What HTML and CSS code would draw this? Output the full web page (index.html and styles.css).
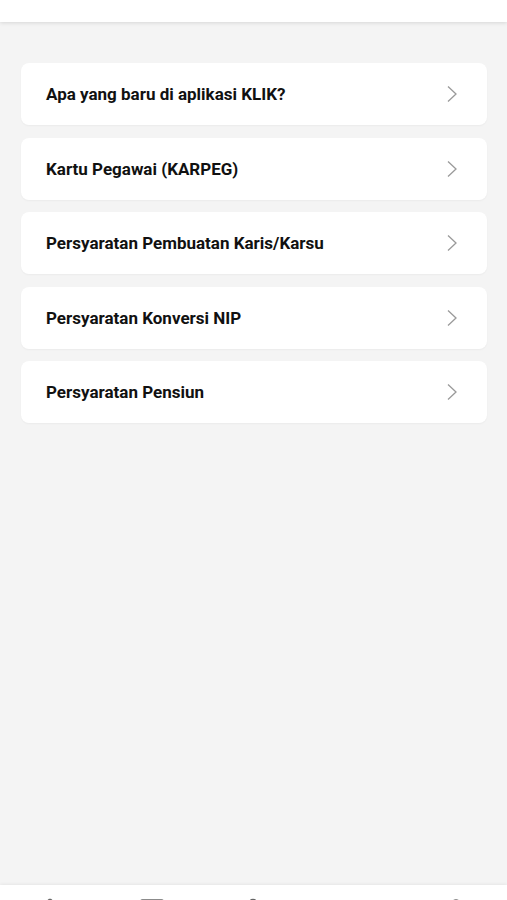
FILE: index.html
```html
<!DOCTYPE html>
<html lang="id">
<head>
    <meta charset="UTF-8">
    <meta name="viewport" content="width=device-width, initial-scale=1.0">
    <title>Informasi</title>
    <link rel="stylesheet" href="styles.css">
</head>
<body>
    <div class="app">
        <header class="topbar"></header>

        <main class="content">
            <a class="menu-item" href="#">
                <span class="menu-title">Apa yang baru di aplikasi KLIK?</span>
                <svg class="chevron" viewBox="0 0 12 18"><path d="M2 1.5 L10 9 L2 16.5"/></svg>
            </a>
            <a class="menu-item" href="#">
                <span class="menu-title">Kartu Pegawai (KARPEG)</span>
                <svg class="chevron" viewBox="0 0 12 18"><path d="M2 1.5 L10 9 L2 16.5"/></svg>
            </a>
            <a class="menu-item" href="#">
                <span class="menu-title">Persyaratan Pembuatan Karis/Karsu</span>
                <svg class="chevron" viewBox="0 0 12 18"><path d="M2 1.5 L10 9 L2 16.5"/></svg>
            </a>
            <a class="menu-item" href="#">
                <span class="menu-title">Persyaratan Konversi NIP</span>
                <svg class="chevron" viewBox="0 0 12 18"><path d="M2 1.5 L10 9 L2 16.5"/></svg>
            </a>
            <a class="menu-item" href="#">
                <span class="menu-title">Persyaratan Pensiun</span>
                <svg class="chevron" viewBox="0 0 12 18"><path d="M2 1.5 L10 9 L2 16.5"/></svg>
            </a>
        </main>

        <!-- bottom navigation, only the top edge of the icons is visible -->
        <nav class="tabbar">
            <span class="tab"><svg viewBox="0 0 24 24"><path d="M12 3 L3 11 M12 3 L21 11"/></svg></span>
            <span class="tab"><svg viewBox="0 0 24 24"><rect x="2" y="4" width="20" height="16" rx="1"/></svg></span>
            <span class="tab"><svg viewBox="0 0 24 24"><circle cx="12" cy="6" r="2.5"/></svg></span>
            <span class="tab"><svg viewBox="0 0 24 24"><path d="M10 6 L14 6"/></svg></span>
            <span class="tab"><svg viewBox="0 0 24 24"><circle cx="12" cy="8" r="4"/></svg></span>
        </nav>
    </div>
</body>
</html>
```

FILE: styles.css
```css
* {
    box-sizing: border-box;
}

html, body {
    margin: 0;
    padding: 0;
    height: 100%;
}

body {
    font-family: Roboto, "Liberation Sans", Arial, sans-serif;
    background-color: #f4f4f4;
    overflow: hidden;
}

.app {
    display: flex;
    flex-direction: column;
    height: 900px;
}

.topbar {
    height: 22px;
    flex-shrink: 0;
    background-color: #fff;
    box-shadow: 0 1px 4px rgba(0, 0, 0, 0.12);
    position: relative;
    z-index: 1;
}

.content {
    flex: 1;
    display: flex;
    flex-direction: column;
    gap: 12.5px;
    padding: 41px 20px 0 21px;
}

.menu-item {
    display: flex;
    align-items: center;
    justify-content: space-between;
    height: 62px;
    padding: 0 29px 0 25px;
    background-color: #fff;
    border-radius: 8px;
    box-shadow: 0 1px 2px rgba(0, 0, 0, 0.04);
    text-decoration: none;
}

.menu-title {
    color: #111;
    font-size: 17px;
    font-weight: bold;
}

.chevron {
    width: 12px;
    height: 18px;
    fill: none;
    stroke: #9a9a9a;
    stroke-width: 1.3;
}

.tabbar {
    height: 15px;
    flex-shrink: 0;
    display: flex;
    justify-content: space-between;
    padding: 11px 38px 0 37px;
    background-color: #fff;
    box-shadow: 0 -1px 3px rgba(0, 0, 0, 0.06);
    overflow: hidden;
}

.tab svg {
    display: block;
    width: 26px;
    height: 26px;
    fill: none;
    stroke: #666;
    stroke-width: 2;
}
```
